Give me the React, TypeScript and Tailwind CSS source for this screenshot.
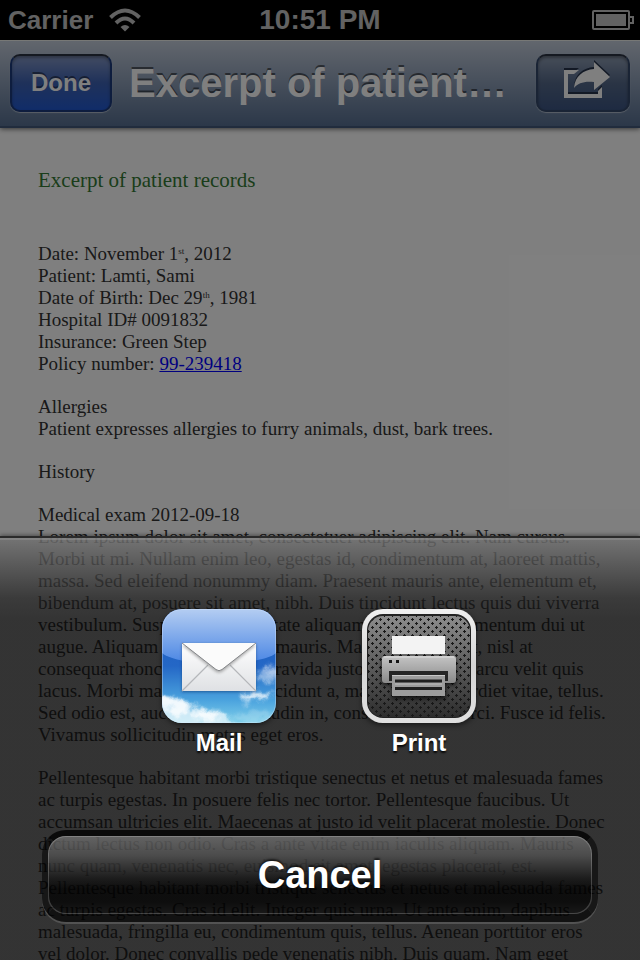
import type { ReactNode } from "react";

const SANS = "font-['Liberation_Sans',Arial,sans-serif]";

function StatusBar() {
  return (
    <div className="grid h-10 shrink-0 grid-cols-3 items-center bg-black px-2 font-bold text-[#c4c4c4]">
      <div className="flex items-center gap-4 text-[26px] leading-10">
        <span>Carrier</span>
        <svg viewBox="0 0 32 24" className="h-6 w-8" fill="none" stroke="currentColor" strokeWidth="4">
          <path d="M1.5 9.5 Q16 -4.5 30.500 9.500" />
          <path d="M7 15 Q16 6 25 15" />
          <path d="M16 23.500 L11.500 19 Q16 15 20.500 19 Z" fill="currentColor" stroke="none" />
        </svg>
      </div>
      <div className="text-center text-[28px] leading-10">10:51 PM</div>
      <svg viewBox="0 0 42 20" className="-mr-0.5 h-5 w-[42px] justify-self-end" fill="none" stroke="currentColor">
        <rect x="1" y="1" width="36" height="18" rx="1" strokeWidth="2" />
        <rect x="4" y="4" width="30" height="12" fill="currentColor" stroke="none" />
        <path d="M38 7 H41 V13 H38" strokeWidth="2" />
      </svg>
    </div>
  );
}

function NavBar() {
  return (
    <header className="relative flex h-[88px] shrink-0 items-center border-t border-b-2 border-t-[#eef0ec] border-b-[#42587a] bg-linear-to-b from-[#c4cddb] to-[#587092] px-2.5 pb-0.5 shadow-[0_1px_5px_rgba(0,0,0,0.6)]">
      <button
        type="button"
        className="h-[58px] w-[102px] shrink-0 rounded-[10px] border-2 border-[#1d3b7c] border-t-[#2b3242] bg-linear-to-b from-[#8597c4] via-[#3d62b4] to-[#2159d2] text-2xl font-bold text-white shadow-[0_1px_1px_rgba(255,255,255,0.5),inset_0_2px_3px_rgba(0,0,0,0.3)] [text-shadow:0_-2px_0_rgba(0,0,0,0.45)]"
      >
        Done
      </button>
      <h1 className="min-w-0 flex-1 pr-3 text-center text-[40px] leading-[48px] font-bold whitespace-nowrap text-white [text-shadow:0_-2px_0_rgba(0,0,0,0.5)]">
        Excerpt of patient…
      </h1>
      <button
        type="button"
        aria-label="Share"
        className="flex h-[58px] w-[94px] shrink-0 items-center justify-center rounded-[10px] border-2 border-[#35496a] border-t-[#2b3242] bg-linear-to-b from-[#8f9db3] via-[#55698a] to-[#3c5583] shadow-[0_1px_1px_rgba(255,255,255,0.5),inset_0_2px_3px_rgba(0,0,0,0.35)]"
      >
        <svg viewBox="-4 3 48 40" className="h-10 w-12 overflow-visible">
          <g fill="#26334b" transform="translate(0 -2)">
            <path d="M1 10 H16 L11 14 H5 V34 H35 V31 L39 27 V38 H1 Z" />
            <path d="M31 2 L47 17 L31 30 V22 C21 21 15 23 11 28 C12 16 20 10 31 9 Z" />
          </g>
          <g fill="#fff">
            <path d="M1 10 H16 L11 14 H5 V34 H35 V31 L39 27 V38 H1 Z" />
            <path d="M31 2 L47 17 L31 30 V22 C21 21 15 23 11 28 C12 16 20 10 31 9 Z" />
          </g>
        </svg>
      </button>
    </header>
  );
}

function Lines({ lines }: { lines: ReactNode[] }) {
  return (
    <p>
      {lines.map((line, i) => (
        <span key={i} className="block">
          {line}
        </span>
      ))}
    </p>
  );
}

const EXAM = [
  "Lorem ipsum dolor sit amet, consectetuer adipiscing elit. Nam cursus.",
  "Morbi ut mi. Nullam enim leo, egestas id, condimentum at, laoreet mattis,",
  "massa. Sed eleifend nonummy diam. Praesent mauris ante, elementum et,",
  "bibendum at, posuere sit amet, nibh. Duis tincidunt lectus quis dui viverra",
  "vestibulum. Suspendisse vulputate aliquam dui. Nulla elementum dui ut",
  "augue. Aliquam vehicula mi at mauris. Maecenas placerat, nisl at",
  "consequat rhoncus, sem nunc gravida justo, quis eleifend arcu velit quis",
  "lacus. Morbi magna magna, tincidunt a, mattis non, imperdiet vitae, tellus.",
  "Sed odio est, auctor ac, sollicitudin in, consequat vitae, orci. Fusce id felis.",
  "Vivamus sollicitudin metus eget eros.",
];

const NOTES = [
  "Pellentesque habitant morbi tristique senectus et netus et malesuada fames",
  "ac turpis egestas. In posuere felis nec tortor. Pellentesque faucibus. Ut",
  "accumsan ultricies elit. Maecenas at justo id velit placerat molestie. Donec",
  "dictum lectus non odio. Cras a ante vitae enim iaculis aliquam. Mauris",
  "nunc quam, venenatis nec, euismod sit amet, egestas placerat, est.",
  "Pellentesque habitant morbi tristique senectus et netus et malesuada fames",
  "ac turpis egestas. Cras id elit. Integer quis urna. Ut ante enim, dapibus",
  "malesuada, fringilla eu, condimentum quis, tellus. Aenean porttitor eros",
  "vel dolor. Donec convallis pede venenatis nibh. Duis quam. Nam eget",
];

function RecordDocument() {
  const sup = "align-[6px] text-[9px] leading-none";
  return (
    <main className="min-h-0 flex-1 bg-white px-[38px] pt-10 font-['Liberation_Serif','Times_New_Roman',serif] text-[19px] leading-[22px] whitespace-nowrap text-[#333]">
      <h2 className="mb-[51px] text-[21px] leading-6 text-[#347a34]">Excerpt of patient records</h2>
      <div className="flex flex-col gap-[21px]">
        <Lines
          lines={[
            <>Date: November 1<span className={sup}>st</span>, 2012</>,
            "Patient: Lamti, Sami",
            <>Date of Birth: Dec 29<span className={sup}>th</span>, 1981</>,
            "Hospital ID# 0091832",
            "Insurance: Green Step",
            <>Policy number: <a href="#policy" className="text-[#0000ff] underline">99-239418</a></>,
          ]}
        />
        <Lines lines={["Allergies", "Patient expresses allergies to furry animals, dust, bark trees."]} />
        <Lines lines={["History"]} />
        <Lines lines={["Medical exam 2012-09-18", ...EXAM]} />
        <Lines lines={NOTES} />
      </div>
    </main>
  );
}

function MailIcon() {
  return (
    <svg viewBox="0 0 114 114" className="size-[114px]">
      <defs>
        <clipPath id="mailClip"><rect width="114" height="114" rx="20" /></clipPath>
        <linearGradient id="sky" x2="0" y2="1">
          <stop offset="0" stopColor="#1d5bc0" />
          <stop offset=".5" stopColor="#2467c6" />
          <stop offset=".8" stopColor="#4ba3de" />
          <stop offset="1" stopColor="#7fd0ea" />
        </linearGradient>
        <linearGradient id="gloss" x2="0" y2="1">
          <stop offset="0" stopColor="#b4cdf2" />
          <stop offset="1" stopColor="#4a86e4" />
        </linearGradient>
        <linearGradient id="paper" x2="0" y2="1">
          <stop offset="0" stopColor="#fff" />
          <stop offset="1" stopColor="#dfe1e4" />
        </linearGradient>
        <filter id="cloud" x="-30%" y="-30%" width="160%" height="160%" colorInterpolationFilters="sRGB">
          <feGaussianBlur stdDeviation="2" result="puff" />
          <feTurbulence type="fractalNoise" baseFrequency="0.09" numOctaves="3" seed="4" result="noise" />
          <feDisplacementMap in="puff" in2="noise" scale="14" xChannelSelector="R" yChannelSelector="G" />
          <feGaussianBlur stdDeviation="0.6" />
        </filter>
        <filter id="soft" x="-20%" y="-20%" width="140%" height="140%"><feGaussianBlur stdDeviation="1.500" /></filter>
      </defs>
      <g clipPath="url(#mailClip)">
        <rect width="114" height="114" fill="url(#sky)" />
        <path d="M0 0 H114 V44 C98 58 16 58 0 44 Z" fill="url(#gloss)" />
        <g fill="#fff" filter="url(#cloud)">
          <path d="M-8 84 L8 86 L14 94 L28 93 L36 101 L50 101 L64 108 L74 118 H-8 Z" opacity=".65" />
          <ellipse cx="4" cy="92" rx="9" ry="7" opacity=".8" />
          <ellipse cx="18" cy="99" rx="10" ry="6" opacity=".8" />
          <ellipse cx="44" cy="106" rx="12" ry="6" opacity=".8" />
          <ellipse cx="93" cy="87" rx="15" ry="4" opacity=".8" />
          <ellipse cx="84" cy="92" rx="6" ry="2" opacity=".4" />
          <ellipse cx="108" cy="66" rx="12" ry="6" opacity=".45" />
          <ellipse cx="110" cy="61" rx="7" ry="5" opacity=".35" />
          <ellipse cx="94" cy="108" rx="24" ry="5" opacity=".2" />
        </g>
        <rect x="20" y="35" width="74" height="48" fill="#00245c" opacity=".5" filter="url(#soft)" />
        <rect x="20" y="34" width="74" height="48" fill="url(#paper)" />
        <path d="M20 82 L46 56 M94 82 L68 56" stroke="#b5b7ba" strokeWidth="1.200" fill="none" />
        <path d="M20 36 L53 62 Q57 65 61 62 L94 36" fill="#777" opacity=".6" filter="url(#soft)" />
        <path d="M20 34 H94 L60 60.500 Q57 63 54 60.500 Z" fill="#fbfbfb" />
        <path d="M20 34 L54 60.500 Q57 63 60 60.500 L94 34" fill="none" stroke="#85878a" strokeWidth="1" />
      </g>
      <rect x=".5" y=".5" width="113" height="113" rx="19.500" fill="none" stroke="#dcecff" opacity=".35" />
    </svg>
  );
}

function PrintIcon() {
  return (
    <svg viewBox="0 0 114 114" className="size-[114px]">
      <defs>
        <linearGradient id="rim" x2="0" y2="1">
          <stop offset="0" stopColor="#f0f0f0" />
          <stop offset=".5" stopColor="#d4d4d4" />
          <stop offset="1" stopColor="#e0e0e0" />
        </linearGradient>
        <linearGradient id="plate" x2="0" y2="1">
          <stop offset="0" stopColor="#8c8c8c" />
          <stop offset=".5" stopColor="#5c5c5c" />
          <stop offset="1" stopColor="#2d2d2d" />
        </linearGradient>
        <linearGradient id="metal" x2="0" y2="1">
          <stop offset="0" stopColor="#c4c4c4" />
          <stop offset="1" stopColor="#8a8a8a" />
        </linearGradient>
        <pattern id="holes" width="8" height="8" patternUnits="userSpaceOnUse">
          <path d="M1 2.500 H4 M2.500 1 V4 M5 6.500 H8 M6.500 5 V8" stroke="#181818" strokeWidth="1.100" />
        </pattern>
        <filter id="shade" x="-20%" y="-20%" width="140%" height="150%"><feGaussianBlur stdDeviation="2" /></filter>
      </defs>
      <rect width="114" height="114" rx="21" fill="url(#rim)" />
      <rect x="5" y="5" width="104" height="104" rx="16" fill="#222" />
      <rect x="6" y="7" width="102" height="101" rx="15" fill="url(#plate)" />
      <rect x="6" y="7" width="102" height="101" rx="15" fill="url(#holes)" />
      <path d="M20 50 H94 V76 H84 V90 H30 V76 H20 Z" fill="#000" opacity=".7" filter="url(#shade)" />
      <rect x="30" y="27" width="53" height="18" fill="#f3f3f3" />
      <path d="M23 47 H91 Q94 47 94 50 V71 Q94 74 91 74 H83 V66 H30 V74 H23 Q20 74 20 71 V50 Q20 47 23 47 Z" fill="url(#metal)" />
      <path d="M22 48 H92" stroke="#dedede" />
      <rect x="27" y="51" width="3" height="3" fill="#151515" />
      <rect x="34" y="51" width="3" height="3" fill="#151515" />
      <path d="M27 62 H86 V72 H83 V66 H30 V72 H27 Z" fill="#252525" />
      <path d="M30 66 H83 V87 H30 Z" fill="#9c9c9c" />
      <path d="M30 66.500 H83" stroke="#c8c8c8" />
      <path d="M33 72 H80 M33 79.500 H80" stroke="#202020" strokeWidth="3" />
      <path d="M33 75 H80" stroke="#bdbdbd" />
    </svg>
  );
}

function Activity({ label, children }: { label: string; children: ReactNode }) {
  return (
    <button
      type="button"
      className="flex w-[114px] flex-col items-center gap-1.5 text-2xl leading-7 font-bold text-white [text-shadow:0_2px_2px_rgba(0,0,0,0.9)]"
    >
      <span className="rounded-[20px] shadow-[0_2px_5px_rgba(0,0,0,0.5)]">{children}</span>
      {label}
    </button>
  );
}

function ActivitySheet() {
  return (
    <section
      aria-label="Share options"
      className="absolute inset-x-0 bottom-0 border-t-2 border-[#2b2b2b] bg-[linear-gradient(to_bottom,rgba(116,116,116,0.82)_0px,rgba(88,88,88,0.78)_22px,rgba(30,30,30,0.7)_62px,rgba(9,9,9,0.64)_84px)] bg-origin-border px-[42px] pt-[71px] pb-[38px] shadow-[0_-1px_4px_rgba(0,0,0,0.4),inset_0_2px_0_rgba(150,150,150,0.45)]"
    >
      <div className="flex justify-center gap-[86px] pr-0.5">
        <Activity label="Mail"><MailIcon /></Activity>
        <Activity label="Print"><PrintIcon /></Activity>
      </div>
      <div className="mt-[73px] rounded-[24px] border-6 border-b-8 border-t-black/80 border-r-black/55 border-b-black/65 border-l-black/55 shadow-[0_2px_0_rgba(100,100,100,0.65)]">
        <button
          type="button"
          className="h-[78px] w-full rounded-[18px] border border-white/20 bg-[linear-gradient(to_bottom,rgba(120,120,120,0.7)_0%,rgba(86,86,86,0.7)_25%,rgba(18,18,18,0.7)_55%,rgba(0,0,0,0.73)_68%,rgba(0,0,0,0.73)_85%,rgba(0,0,0,0.5)_100%)] bg-origin-border text-[38px] leading-[76px] font-bold text-white [text-shadow:0_-2px_2px_rgba(0,0,0,0.6)]"
        >
          Cancel
        </button>
      </div>
    </section>
  );
}

export default function App() {
  return (
    <div className={`relative flex h-screen flex-col overflow-hidden ${SANS}`}>
      <StatusBar />
      <NavBar />
      <RecordDocument />
      <div className="absolute inset-0 bg-black/50" />
      <ActivitySheet />
    </div>
  );
}
